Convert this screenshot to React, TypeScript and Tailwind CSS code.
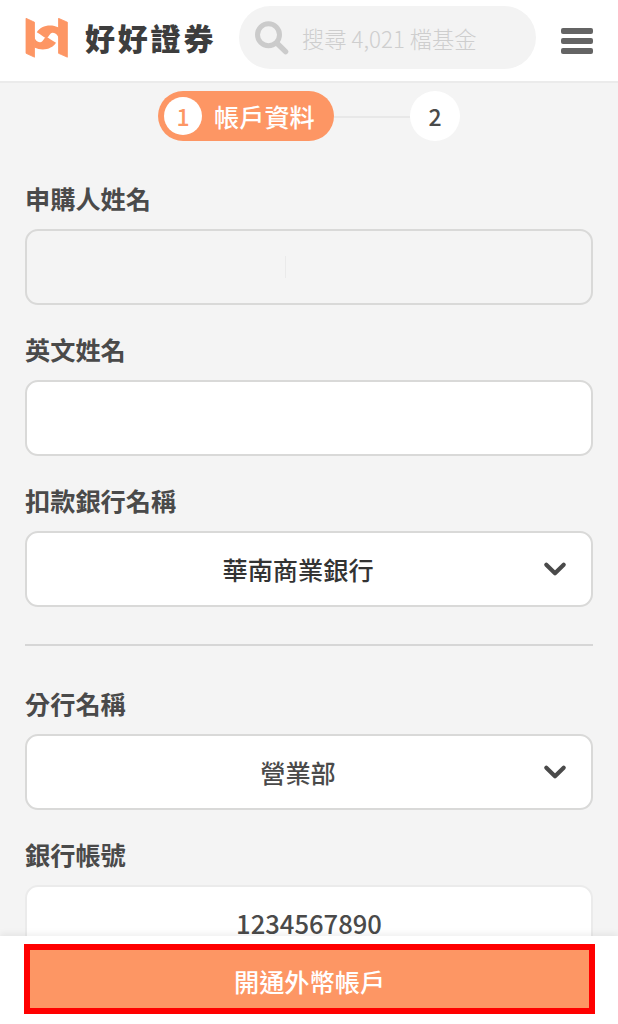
import { useState } from "react";
import type { ReactNode } from "react";

function Logo() {
  return (
    <svg width="44" height="40" viewBox="25 18 44 40" fill="#fd9664" className="shrink-0">
      <path d="M26 18.3 34.5 22.2V57.2L26 53.3Z" stroke="#fd9664" strokeWidth="0.8" strokeLinejoin="round" />
      <path d="M58.5 18.3 67.4 22.2V57.2L58.5 53.3Z" stroke="#fd9664" strokeWidth="0.8" strokeLinejoin="round" />
      <path d="M36.8 32.2C40.5 26 50 23.2 58.8 27.5V38.5C57.6 34.8 55.4 32.6 52.6 32.8C49.4 33.1 49.6 36.6 46.4 38.3C43.6 37 41 34.6 36.8 32.2Z" />
      <path d="M56 42.8C52.3 49 42.8 51.5 34.2 47.5V36.5C35.2 40.2 37.4 42.4 40.2 42.2C43.4 41.9 43.2 38.4 46.4 36.7C49.2 38 51.8 40.4 56 42.8Z" />
    </svg>
  );
}

function SearchIcon() {
  return (
    <svg width="34" height="34" viewBox="0 0 34 34" fill="none" stroke="#cbcbcb">
      <circle cx="13.5" cy="13.7" r="11" strokeWidth="5" />
      <path d="M22 22.3 30.6 30.6" strokeWidth="5.4" strokeLinecap="round" />
    </svg>
  );
}

function Chevron() {
  return (
    <svg width="24" height="16" viewBox="0 0 24 16" fill="none" stroke="#4a4a4a" strokeWidth="4.2" strokeLinecap="round" strokeLinejoin="round">
      <path d="M3.3 3.7 12 12.2 20.7 3.7" />
    </svg>
  );
}

function Field({ label, children }: { label: string; children: ReactNode }) {
  return (
    <div className="flex flex-col gap-[14px]">
      <span className="h-[34px] text-[25.2px] leading-[34px] font-bold">{label}</span>
      {children}
    </div>
  );
}

function SelectBox({ value, dark = false }: { value: string; dark?: boolean }) {
  return (
    <button type="button" className="flex h-[76px] w-full items-center rounded-[13px] border-2 border-[#d9d9d8] bg-white px-[24px]">
      <span className={`flex-1 pl-[2px] text-center text-[25.2px] leading-[36px] font-medium ${dark ? "text-[#333333]" : "text-[#4a4a4a]"}`}>
        {value}
      </span>
      <Chevron />
    </button>
  );
}

export default function App() {
  const [englishName, setEnglishName] = useState("");

  return (
    <div className="flex h-[1024px] w-[618px] flex-col overflow-hidden bg-[#f4f4f4] font-['Noto_Sans_CJK_TC',sans-serif] text-[#4a4a4a]">
      <header className="flex h-[83px] shrink-0 border-b-2 border-[#ebebeb] bg-white">
        <div className="flex w-[214px] shrink-0 pt-[18px] pl-[25px]">
          <Logo />
          <span className="ml-[16px] h-[40px] text-[30px] leading-[38px] font-black tracking-[2.8px] whitespace-nowrap text-[#3d3d3d]">
            好好證券
          </span>
        </div>
        <div className="mt-[6px] ml-[25px] flex h-[63px] w-[297px] shrink-0 items-center rounded-full bg-[#f3f3f3] pl-[16px]">
          <SearchIcon />
          <span className="ml-[13px] text-[22.3px] leading-[32px] font-light whitespace-nowrap text-[#cecece]">搜尋 4,021 檔基金</span>
        </div>
        <button type="button" aria-label="選單" className="mt-[28px] ml-[25px] flex h-[26px] w-[32px] shrink-0 flex-col justify-between">
          <span className="h-[6px] w-full rounded-[2px] bg-[#646464]" />
          <span className="h-[6px] w-full rounded-[2px] bg-[#646464]" />
          <span className="h-[6px] w-full rounded-[2px] bg-[#646464]" />
        </button>
      </header>

      <main className="flex h-[853px] shrink-0 flex-col overflow-hidden px-[25px] pt-[8px]">
        <div className="flex h-[50px] shrink-0 items-center pl-[133px]">
          <div className="flex h-[50px] w-[176px] items-center rounded-full bg-[#fd9664] pl-[6px]">
            <span className="flex size-[38px] items-center justify-center rounded-full bg-white text-[23px] font-medium text-[#fd9664]">1</span>
            <span className="ml-[12px] text-[25.2px] leading-[36px] font-medium text-white">帳戶資料</span>
          </div>
          <span className="mt-[2px] h-[2px] w-[76px] bg-[#e8e8e8]" />
          <span className="flex size-[50px] items-center justify-center rounded-full bg-white text-[23px] font-medium">2</span>
        </div>

        <div className="mt-[40px] flex shrink-0 flex-col gap-[27px]">
          <Field label="申購人姓名">
            <div className="flex h-[76px] items-center rounded-[13px] border-2 border-[#d9d9d8] pl-[258px]">
              <span className="h-[22px] w-px bg-[#eaeaea]" />
            </div>
          </Field>
          <Field label="英文姓名">
            <input
              value={englishName}
              onChange={(e) => setEnglishName(e.target.value)}
              className="h-[76px] w-full rounded-[13px] border-2 border-[#d9d9d8] bg-white text-center text-[25px] font-medium"
            />
          </Field>
          <Field label="扣款銀行名稱">
            <SelectBox value="華南商業銀行" dark />
          </Field>
        </div>

        <hr className="mt-[37px] mb-[40px] h-[2px] shrink-0 border-0 bg-[#d6d6d6]" />

        <div className="flex shrink-0 flex-col gap-[27px]">
          <Field label="分行名稱">
            <SelectBox value="營業部" />
          </Field>
          <Field label="銀行帳號">
            <div className="flex h-[76px] justify-center rounded-[13px] border-2 border-[#ebebeb] bg-white pt-[26px] text-[25.6px] leading-[20px] font-medium">
              1234567890
            </div>
          </Field>
        </div>
      </main>

      <footer className="relative h-[88px] shrink-0 bg-white px-[24px] pt-[8px] shadow-[0_-3px_6px_rgba(0,0,0,0.06)]">
        <button type="button" className="h-[70px] w-[571px] border-6 border-[#ff0000] bg-[#fd9664] pt-[3px] text-[25.2px] leading-[36px] font-medium text-white">
          開通外幣帳戶
        </button>
      </footer>
    </div>
  );
}
